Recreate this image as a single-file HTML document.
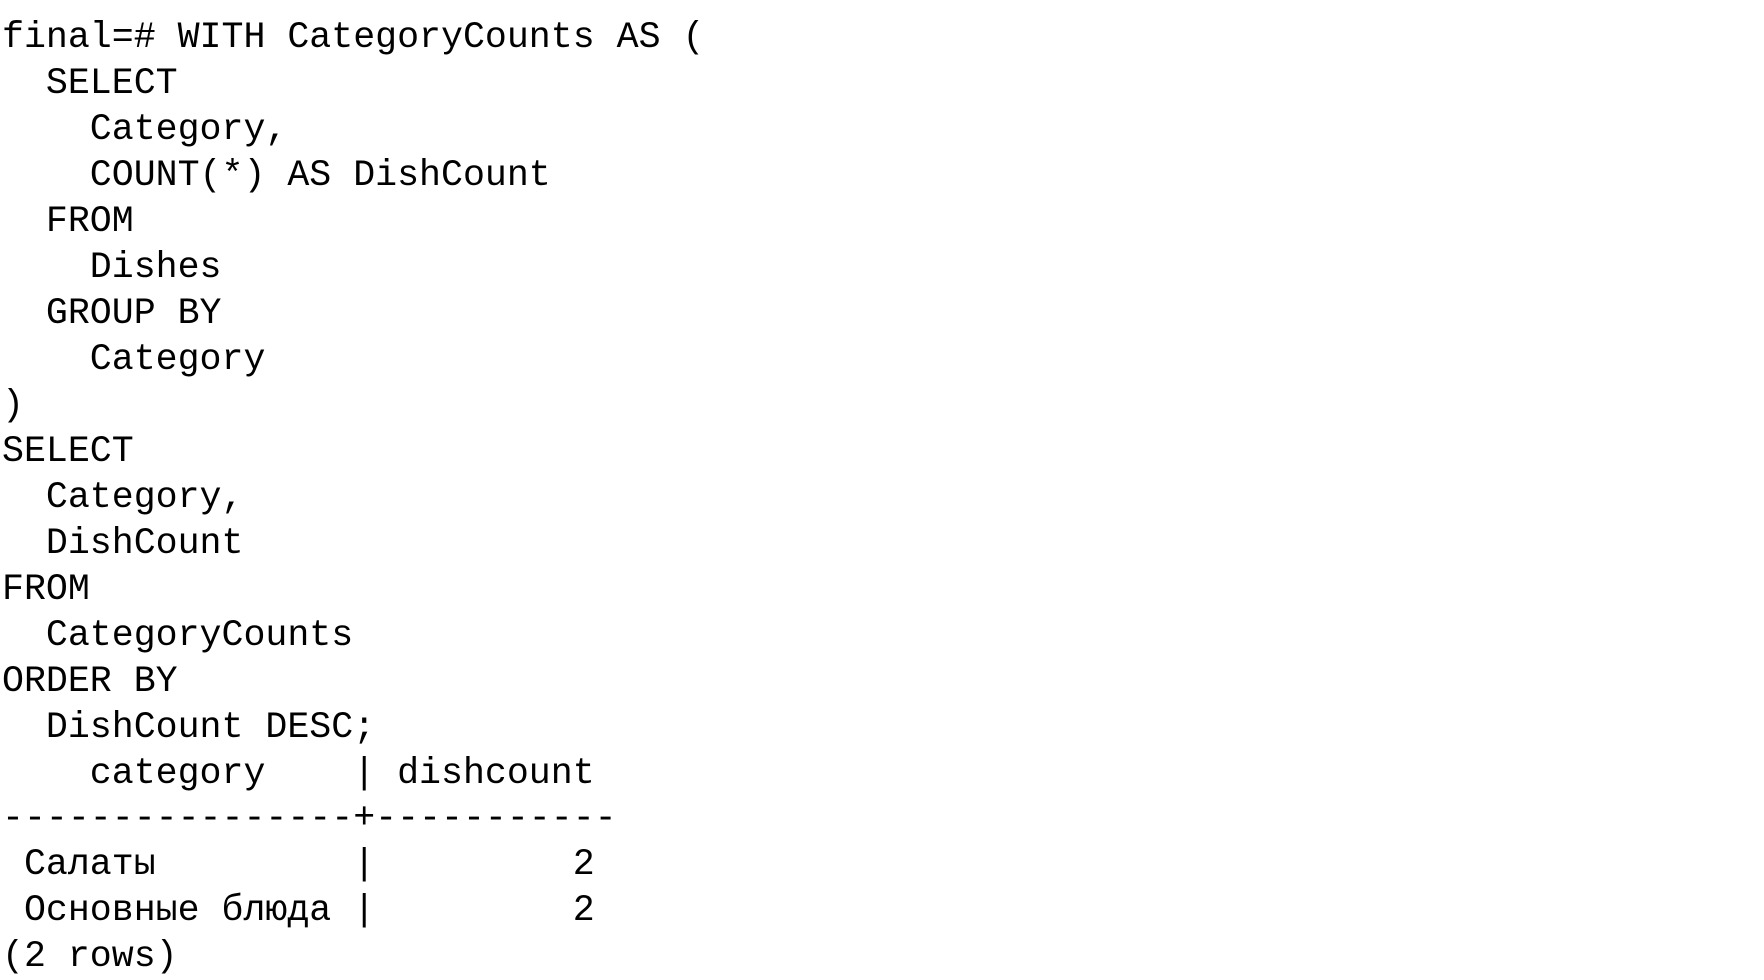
<!DOCTYPE html>
<html><head><meta charset="utf-8"><style>
html,body{margin:0;padding:0;background:#fff;width:1764px;height:976px;overflow:hidden}
pre{margin:0;position:absolute;left:2px;top:15px;font-family:"Liberation Mono","DejaVu Sans Mono",monospace;font-size:36.6px;line-height:45.97px;color:#000;white-space:pre}
</style></head><body><pre>final=# WITH CategoryCounts AS (
  SELECT
    Category,
    COUNT(*) AS DishCount
  FROM
    Dishes
  GROUP BY
    Category
)
SELECT
  Category,
  DishCount
FROM
  CategoryCounts
ORDER BY
  DishCount DESC;
    category    | dishcount
----------------+-----------
 Салаты         |         2
 Основные блюда |         2
(2 rows)</pre></body></html>
